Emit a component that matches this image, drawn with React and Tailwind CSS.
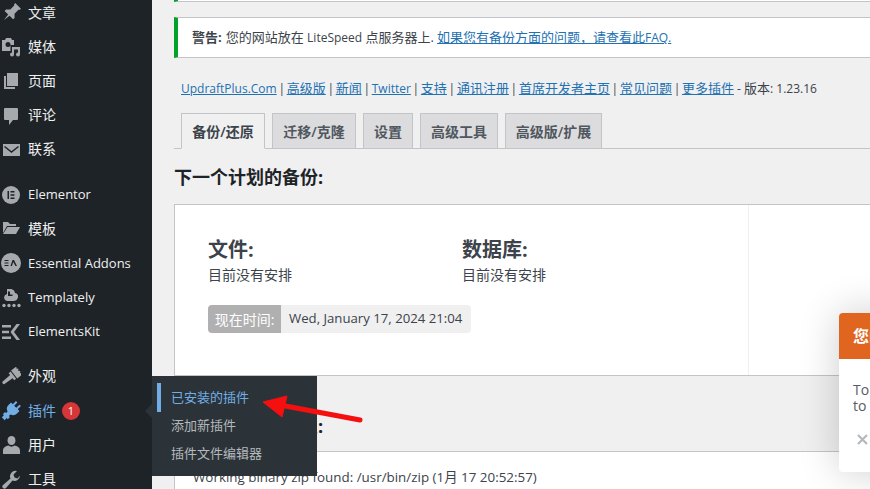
const font = "font-['Open_Sans','Noto_Sans_CJK_SC',sans-serif]";

const Icon = ({children, fill = "#a7aaad"}) => (
    <svg viewBox="0 0 20 20" className="w-5 h-5" fill={fill}>
        {children}
    </svg>
);

const PinIcon = () => (
    <Icon>
        <path transform="rotate(45 10 10)" d="M6 0h8v1.500l-1 1v5.500l3 3v2h-5l-1 7-1-7H4v-2l3-3V2.500l-1-1z" />
    </Icon>
);

const MediaIcon = () => (
    <Icon>
        <path fillRule="evenodd" d="M1 3h3l1-2h5l1 2h2v5H9.500v6H1zM7 5a2.500 2.500 0 100 5 2.500 2.500 0 000-5z" />
        <path d="M11 10h8v7.500a2 2 0 11-2-2V12.500h-4v5a2 2 0 11-2-2z" />
    </Icon>
);

const PageIcon = () => (
    <Icon>
        <path d="M6 2h11v13H6z" />
        <path d="M3 5h2v11h9v2H3z" />
    </Icon>
);

const CommentIcon = () => (
    <Icon>
        <path d="M4 2h12a1 1 0 011 1v10a1 1 0 01-1 1h-4l-4 5v-5H4a1 1 0 01-1-1V3a1 1 0 011-1z" />
    </Icon>
);

const MailIcon = () => (
    <Icon>
        <path d="M2 4h17v12H2z" />
        <path d="M3.500 6.500l7 5.500 7-5.500" fill="none" stroke="#1d2327" strokeWidth="1.500" />
    </Icon>
);

const ElementorIcon = () => (
    <Icon>
        <circle cx="10" cy="10" r="9" />
        <path d="M6.500 6h1.500v8H6.500zM9.500 6h4v1.500h-4zM9.500 9.250h4v1.500h-4zM9.500 12.500h4V14h-4z" fill="#1d2327" />
    </Icon>
);

const FolderIcon = () => (
    <Icon>
        <path d="M2 3h5l2 2h6v2H6l-4 7z" />
        <path d="M6.500 8H19l-4 7H2z" />
    </Icon>
);

const EaIcon = () => (
    <Icon>
        <circle cx="10" cy="10" r="10" />
        <path d="M3.500 7h4v1h-4zM3.500 9.500h4v1h-4zM3.500 12h4v1h-4z" fill="#1d2327" />
        <path d="M11.500 7h1.500l3 6h-1.500L12.200 9l-1.200 4H9.500z" fill="#1d2327" />
    </Icon>
);

const TemplatelyIcon = () => (
    <Icon>
        <path d="M6 1h4a5 5 0 014 4 4 4 0 013 4.500A5 5 0 0112 13H6a4 4 0 01-3-3.500A4 4 0 016 6z" />
        <path d="M7 3.500h2v3h2.500v1.500H7z" fill="#1d2327" />
        <circle cx="3" cy="17.500" r="1.700" />
        <circle cx="8" cy="17.500" r="1.700" />
        <circle cx="13" cy="17.500" r="1.700" />
        <circle cx="18" cy="17.500" r="1.700" />
    </Icon>
);

const KitIcon = () => (
    <Icon>
        <path d="M1 3h9v2.500H1zM1 8.750h7v2.500H1zM1 14.500h9V17H1z" />
        <path d="M15.500 2H19l-6 8 6 8h-3.500l-6-8z" />
    </Icon>
);

const BrushIcon = () => (
    <Icon>
        <path
            transform="rotate(52 10 10)"
            d="M5 -1l1.500 1.500L8 -1l1.500 1.500L11 -1l1.500 1.500L14 -1l1 1v6H5zM5.500 7h9v2.500h-2.500L11.500 19a1.500 1.500 0 01-3 0L8 9.500H5.500z"
        />
    </Icon>
);

const PluginIcon = () => (
    <Icon fill="#72aee6">
        <path
            transform="rotate(45 10 10)"
            d="M6.500 -0.500h2V4h3V-0.500h2V4H16v3.500a5.500 5.500 0 01-4 5.300V15h1.500v3H12v3H8v-3H6.500v-3H8v-2.200a5.500 5.500 0 01-4-5.300V4h2.500z"
        />
    </Icon>
);

const UserIcon = () => (
    <Icon>
        <ellipse cx="10.500" cy="5.500" rx="4" ry="4.500" />
        <path d="M2 15.500c0-3 3-4.500 5.500-5 1.500 1.500 4.500 1.500 6 0 2.500.5 5.500 2 5.500 5V19H2z" />
    </Icon>
);

const WrenchIcon = () => (
    <Icon>
        <path d="M19 5.500a5.500 5.500 0 01-7.500 5L5 18a2 2 0 01-3-3l7.500-6.500a5.500 5.500 0 016.500-7.500l-3.500 3.500 1 3 3 1z" />
    </Icon>
);

const menuGroups = [
    [
        {label: "文章", icon: <PinIcon />},
        {label: "媒体", icon: <MediaIcon />},
        {label: "页面", icon: <PageIcon />},
        {label: "评论", icon: <CommentIcon />},
        {label: "联系", icon: <MailIcon />},
    ],
    [
        {label: "Elementor", icon: <ElementorIcon />, latin: true},
        {label: "模板", icon: <FolderIcon />},
        {label: "Essential Addons", icon: <EaIcon />, latin: true},
        {label: "Templately", icon: <TemplatelyIcon />, latin: true},
        {label: "ElementsKit", icon: <KitIcon />, latin: true},
    ],
    [
        {label: "外观", icon: <BrushIcon />},
        {label: "插件", icon: <PluginIcon />, active: true},
        {label: "用户", icon: <UserIcon />},
        {label: "工具", icon: <WrenchIcon />},
    ],
];

const topLinks = [
    {label: "UpdraftPlus.Com", latin: true},
    {label: "高级版"},
    {label: "新闻"},
    {label: "Twitter", latin: true},
    {label: "支持"},
    {label: "通讯注册"},
    {label: "首席开发者主页"},
    {label: "常见问题"},
    {label: "更多插件"},
];
const tabs = [
    {label: "备份/还原", width: "w-[84px]", active: true},
    {label: "迁移/克隆", width: "w-[84px]"},
    {label: "设置", width: "w-[50px]"},
    {label: "高级工具", width: "w-[78px]"},
    {label: "高级版/扩展", width: "w-[97px]"},
];

const Sidebar = () => (
    <div className="w-[152px] shrink-0 h-[520px] -mt-[4px] bg-[#1d2327]">
        {menuGroups.map((group, i) => (
            <div key={i} className={i === 0 ? "" : "mt-[11px]"}>
                {group.map((item) => (
                    <div key={item.label} className="h-[34.200px] flex items-center pl-[1px]">
                        <span className="w-[27px] flex shrink-0">{item.icon}</span>
                        <span className={`${item.latin ? "text-[13px]" : "text-[14px] pb-[2px]"} ${item.active ? "text-[#72aee6]" : "text-[#f0f0f1]"}`}>
                            {item.label}
                        </span>
                        {item.active && (
                            <span className="ml-[6px] w-[18px] h-[18px] rounded-full bg-[#d63638] text-white text-[11px] flex items-center justify-center">1</span>
                        )}
                    </div>
                ))}
            </div>
        ))}
    </div>
);

const Flyout = () => (
    <div className="absolute left-[152px] top-[376px] w-[165px] h-[100px] bg-[#2c3338] pt-[7px]">
        <div className="absolute -left-[7px] top-[28px] w-0 h-0 border-y-[7px] border-y-transparent border-r-[7px] border-r-[#2c3338]" />
        <div className="h-[29px] flex items-center pl-[5px] text-[13px] text-[#72aee6]">
            <span className="w-[4px] h-[29px] bg-[#72aee6] mr-[10px]" />
            已安装的插件
        </div>
        <div className="h-[28px] flex items-center pl-[19px] text-[13px] text-[#b4b9be]">添加新插件</div>
        <div className="h-[28px] flex items-center pl-[19px] text-[13px] text-[#b4b9be]">插件文件编辑器</div>
    </div>
);

const RedArrow = () => (
    <svg className="absolute left-[255px] top-[390px] w-[115px] h-[40px]" viewBox="0 0 115 40">
        <path d="M105 30L25 15" fill="none" stroke="#f50f0f" strokeWidth="5" strokeLinecap="round" />
        <path d="M8 12L32 6L27 27z" fill="#f50f0f" stroke="#f50f0f" strokeWidth="1" strokeLinejoin="round" />
    </svg>
);

const Dialog = () => (
    <div className="absolute left-[839px] top-[313px] w-[300px] h-[159px] rounded-[4px] bg-white shadow-[0_0_40px_rgba(0,0,0,0.2)] overflow-hidden">
        <div className="h-[46px] bg-[#e0651f] pl-[14px] flex items-center text-[16px] font-bold text-white">您的</div>
        <div className="pl-[14px] pt-[23px] text-[14px] leading-[16px] text-[#555d66]">
            <p>To get</p>
            <p>to see</p>
        </div>
        <svg className="absolute left-[18px] top-[121px] w-[11px] h-[11px]" viewBox="0 0 11 11">
            <path d="M1 1l9 9M10 1l-9 9" stroke="#b4b9be" strokeWidth="2.200" />
        </svg>
    </div>
);

const App = () => {
    return (
        <div className={`relative w-[870px] h-[489px] overflow-hidden flex bg-[#f0f0f1] text-[#3c434a] ${font}`}>
            <Sidebar />
            <div className="w-[760px] shrink-0 pl-[22px]">
                <div className="h-[2px] bg-white border-b border-[#c3c4c7] border-l-4 border-l-[#00a32a]" />
                <div className="mt-[15px] h-[41px] pt-[1px] bg-white border border-[#c3c4c7] border-l-4 border-l-[#00a32a] flex items-center pl-[14px] text-[13px]">
                    <strong className="font-bold">警告:</strong>
                    <span className="ml-[4px]">您的网站放在 <span className="text-[12px]">LiteSpeed</span> 点服务器上.</span>
                    <a className="ml-[3px] text-[#2271b1] underline">如果您有备份方面的问题，请查看此<span className="text-[12px]">FAQ.</span></a>
                </div>
                <div className="mt-[21px] h-[20px] ml-[7px] flex items-center text-[12px] whitespace-pre">
                    {topLinks.map((link, i) => (
                        <span key={link.label}>
                            {i > 0 && <span className="inline-block w-[10px] text-center">|</span>}
                            <a className={link.latin ? "text-[#2271b1] underline" : "text-[13px] text-[#2271b1] underline"}>{link.label}</a>
                        </span>
                    ))}
                    <span> - <span className="text-[13px]">版本</span>: 1.23.16</span>
                </div>
                <div className="mt-[14px] h-[36px] flex gap-[7px] pl-[7px] border-b border-[#c3c4c7]">
                    {tabs.map((tab) => (
                        <div
                            key={tab.label}
                            className={`${tab.width} h-[36px] flex items-center justify-center border border-[#c3c4c7] text-[14px] font-semibold ${tab.active ? "bg-[#f0f0f1] border-b-[#f0f0f1] text-[#3c434a]" : "bg-[#dcdcde] text-[#50575e]"}`}
                        >
                            {tab.label}
                        </div>
                    ))}
                </div>
                <h2 className="mt-[16px] text-[18px] leading-[24px] font-bold text-[#1d2327]">下一个计划的备份:</h2>
                <div className="mt-[15px] h-[172px] bg-white border border-[#c3c4c7] flex">
                    <div className="w-[574px] border-r border-[#f0f0f1] pl-[33px] pt-[31px]">
                        <div className="flex">
                            <div className="w-[254px]">
                                <h3 className="text-[20px] leading-[28px] font-bold">文件:</h3>
                                <p className="text-[14px] leading-[22px]">目前没有安排</p>
                            </div>
                            <div>
                                <h3 className="text-[20px] leading-[28px] font-bold">数据库:</h3>
                                <p className="text-[14px] leading-[22px]">目前没有安排</p>
                            </div>
                        </div>
                        <div className="mt-[19px] inline-flex h-[28px] items-center text-[14px] rounded-[4px] overflow-hidden">
                            <span className="w-[73px] h-full flex items-center justify-center bg-[#b0b0b0] text-white">现在时间:</span>
                            <span className="w-[190px] h-full flex items-center pl-[8px] bg-[#f0f0f1] text-[13.200px] whitespace-nowrap">Wed, January 17, 2024 21:04</span>
                        </div>
                    </div>
                </div>
                <h2 className="mt-[38px] text-[18px] leading-[24px] font-bold text-[#1d2327]">上一次的日志消息:</h2>
                <div className="mt-[13px] h-[60px] bg-white border border-[#c3c4c7] pl-[18px] pt-[15px] text-[13.400px] leading-[20px]">
                    Working binary zip found: /usr/bin/zip (1月 17 20:52:57)
                </div>
            </div>
            <Flyout />
            <RedArrow />
            <Dialog />
        </div>
    );
};

export default App;
